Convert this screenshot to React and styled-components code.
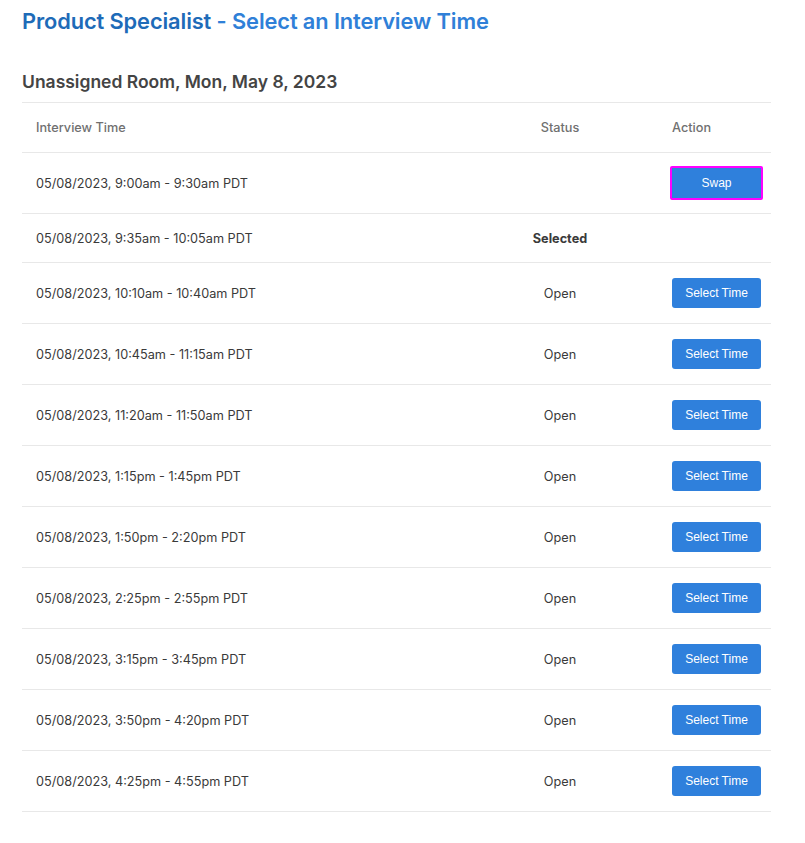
import styled, { createGlobalStyle } from "styled-components";

const GlobalStyle = createGlobalStyle`
  body {
    margin: 0;
    background: #ffffff;
    font-family: Inter, "Open Sans", sans-serif;
    color: #3a3a3a;
  }
`;

const Page = styled.div`
  padding: 8px 34px 30px 22px;
`;

const Title = styled.h1`
  margin: 0;
  font-size: 21.8px;
  font-weight: 600;
  line-height: 26px;
  color: #2f80d8;
  letter-spacing: -0.1px;
`;

const TitleDark = styled.span`
  color: #1e6bb8;
`;

const RoomHeading = styled.h2`
  margin: 37px 0 0;
  font-size: 17.5px;
  font-weight: 600;
  line-height: 22px;
  color: #444444;
  padding-bottom: 9px;
  border-bottom: 1px solid #e8e8e8;
`;

const Row = styled.div`
  display: grid;
  grid-template-columns: 440px 196px 1fr;
  align-items: center;
  height: ${(p) => p.$height}px;
  border-bottom: 1px solid #e8e8e8;
  font-size: 12.7px;
  color: ${(p) => (p.$head ? "#707070" : "#3a3a3a")};
  font-weight: ${(p) => (p.$head ? 500 : 400)};
`;

const TimeCell = styled.div`
  padding-left: 14px;
`;

const StatusCell = styled.div`
  text-align: center;
  font-weight: ${(p) => (p.$bold ? 700 : "inherit")};
`;

const ActionCell = styled.div`
  padding-left: 14px;
  display: flex;
`;

const Button = styled.button`
  font-family: "Liberation Sans", Arial, sans-serif;
  font-size: 12px;
  color: #ffffff;
  background: #2f80dc;
  border: ${(p) => (p.$focused ? "2px solid #ff00ff" : "none")};
  border-radius: ${(p) => (p.$focused ? "2px" : "3px")};
  height: ${(p) => (p.$focused ? 34 : 30)}px;
  width: ${(p) => (p.$focused ? 93 : 89)}px;
  margin-left: ${(p) => (p.$focused ? -2 : 0)}px;
  padding: 0;
  cursor: pointer;
`;

const slots = [
  "05/08/2023, 10:10am - 10:40am PDT",
  "05/08/2023, 10:45am - 11:15am PDT",
  "05/08/2023, 11:20am - 11:50am PDT",
  "05/08/2023, 1:15pm - 1:45pm PDT",
  "05/08/2023, 1:50pm - 2:20pm PDT",
  "05/08/2023, 2:25pm - 2:55pm PDT",
  "05/08/2023, 3:15pm - 3:45pm PDT",
  "05/08/2023, 3:50pm - 4:20pm PDT",
  "05/08/2023, 4:25pm - 4:55pm PDT",
];

export default function App() {
  return (
    <Page>
      <GlobalStyle />
      <Title>
        <TitleDark>Product Specialist</TitleDark> - Select an Interview Time
      </Title>
      <RoomHeading>Unassigned Room, Mon, May 8, 2023</RoomHeading>
      <Row $head $height={49}>
        <TimeCell>Interview Time</TimeCell>
        <StatusCell>Status</StatusCell>
        <ActionCell>Action</ActionCell>
      </Row>
      <Row $height={60}>
        <TimeCell>05/08/2023, 9:00am - 9:30am PDT</TimeCell>
        <StatusCell />
        <ActionCell>
          <Button $focused>Swap</Button>
        </ActionCell>
      </Row>
      <Row $height={48}>
        <TimeCell>05/08/2023, 9:35am - 10:05am PDT</TimeCell>
        <StatusCell $bold>Selected</StatusCell>
        <ActionCell />
      </Row>
      {slots.map((s) => (
        <Row key={s} $height={60}>
          <TimeCell>{s}</TimeCell>
          <StatusCell>Open</StatusCell>
          <ActionCell>
            <Button>Select Time</Button>
          </ActionCell>
        </Row>
      ))}
    </Page>
  );
}
